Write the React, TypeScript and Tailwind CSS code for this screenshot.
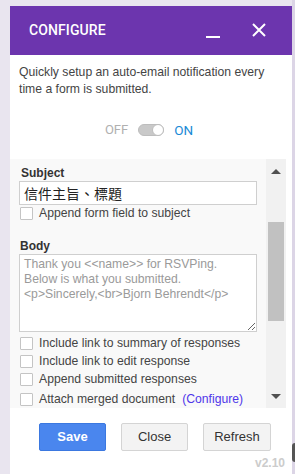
import React from 'react';

const sans = { fontFamily: '"Liberation Sans", Arial, sans-serif' };

function Box() {
  return <div className="w-[13px] h-[13px] shrink-0 border border-[#c4c4c4] bg-white rounded-[1px]" />;
}

function CheckRow({ label, extra, className = '' }: { label: string; extra?: string; className?: string }) {
  return (
    <div className={`flex items-center h-[13px] ${className}`}>
      <div className="ml-[1px]">
        <Box />
      </div>
      <span className="ml-[6px] text-[12.2px] leading-[13px] text-[#444]">{label}</span>
      {extra && <span className="ml-[7px] text-[12.2px] leading-[13px] text-[#4f36ea]">{extra}</span>}
    </div>
  );
}

export default function App() {
  return (
    <div className="w-[295px] h-[474px] bg-[#e9e5ef] flex overflow-hidden" style={sans}>
      <div className="w-[10px] shrink-0" />
      <div className="mt-[6px] w-[282px] shrink-0 bg-white flex flex-col">
        {/* header */}
        <div className="h-[49px] bg-[#6c35ae] flex items-center pl-[19px] pr-[26px]">
          <span className="text-white text-[14px] font-medium tracking-[0.1px]" style={{ fontFamily: 'Roboto, sans-serif' }}>
            CONFIGURE
          </span>
          <div className="ml-auto w-[14px] h-[2px] bg-white mt-[12px]" />
          <svg className="ml-[32px] -mt-[1px]" width="14" height="14" viewBox="0 0 14 14" fill="none" stroke="white" strokeWidth="2">
            <path d="M1 1L13 13M13 1L1 13" />
          </svg>
        </div>

        <p className="pl-[9px] pr-[10px] pt-[9px] text-[12.2px] leading-[17px] text-[#444]">
          Quickly setup an auto-email notification every time a form is submitted.
        </p>

        {/* toggle */}
        <div className="mt-[22px] h-[20px] flex items-center justify-center gap-[10px] pr-[4px]" style={{ fontFamily: 'Roboto, sans-serif' }}>
          <span className="text-[13px] text-[#b0b0b0]">OFF</span>
          <div className="w-[26px] h-[12px] rounded-full bg-[#c9c9c9] border border-[#bdbdbd] flex justify-end items-center">
            <div className="w-[12px] h-[12px] rounded-full bg-white border border-[#bdbdbd] -mr-[1px]" />
          </div>
          <span className="text-[13.5px] text-[#1a8ad6]">ON</span>
        </div>

        {/* scroll area */}
        <div className="mt-[19px] w-[276px] h-[249px] flex">
          <div className="w-[256px] bg-[#f9f9f9] overflow-hidden pl-[9px] pr-[9px] pt-[7px]">
            <div className="text-[12px] leading-[14px] font-bold text-[#333] pl-[2px]">Subject</div>
            <div className="mt-[1px] h-[24px] border border-[#cfcfcf] bg-white flex items-center pl-[4px] text-[14px] text-[#222]" style={{ fontFamily: '"Noto Sans CJK TC", "Noto Sans CJK SC", sans-serif' }}>
              信件主旨、標題
            </div>
            <CheckRow label="Append form field to subject" className="mt-[2px]" />
            <div className="mt-[19px] text-[12px] leading-[14px] font-bold text-[#333] pl-[1px]">Body</div>
            <textarea
              readOnly
              value={'Thank you <<name>> for RSVPing.\nBelow is what you submitted.\n<p>Sincerely,<br>Bjorn Behrendt</p>'}
              className="mt-[1px] block w-full h-[78px] border border-[#cfcfcf] bg-white px-[4px] pt-[2px] text-[12.2px] leading-[15px] text-[#9a9a9a] resize-y outline-none"
              style={sans}
            />
            <CheckRow label="Include link to summary of responses" className="mt-[5px]" />
            <CheckRow label="Include link to edit response" className="mt-[5px]" />
            <CheckRow label="Append submitted responses" className="mt-[5px]" />
            <CheckRow label="Attach merged document" extra="(Configure)" className="mt-[7px]" />
          </div>
          {/* scrollbar */}
          <div className="w-[20px] bg-[#f1f1f1] flex flex-col">
            <div className="h-[24px] flex items-center justify-center">
              <div className="w-0 h-0 border-l-[5px] border-r-[5px] border-b-[5px] border-l-transparent border-r-transparent border-b-[#505050]" />
            </div>
            <div className="flex-1">
              <div className="mt-[39px] mx-[2px] h-[99px] bg-[#c1c1c1]" />
            </div>
            <div className="h-[24px] flex items-center justify-center">
              <div className="w-0 h-0 border-l-[5px] border-r-[5px] border-t-[5px] border-l-transparent border-r-transparent border-t-[#505050]" />
            </div>
          </div>
        </div>

        {/* buttons */}
        <div className="mt-[15px] pl-[29px] flex gap-[15px]">
          <button className="w-[67px] h-[28px] rounded-[2px] bg-[#4a86ee] border border-[#3b78e0] text-white text-[13px] font-bold">
            Save
          </button>
          <button className="w-[67px] h-[28px] rounded-[2px] bg-[#f3f3f3] border border-[#d4d4d4] text-[#333] text-[13px]">
            Close
          </button>
          <button className="w-[68px] h-[28px] rounded-[2px] bg-[#f3f3f3] border border-[#d4d4d4] text-[#333] text-[13px]">
            Refresh
          </button>
        </div>
        <div className="mt-[3px] pr-[7px] text-right text-[12px] font-bold text-[#cccccc]">v2.10</div>
      </div>
      <div className="w-[3px] shrink-0 bg-[#dcd5e6] flex flex-col">
        <div className="mt-[443px] h-[19px] bg-[#555] rounded-l-[3px]" />
      </div>
    </div>
  );
}
